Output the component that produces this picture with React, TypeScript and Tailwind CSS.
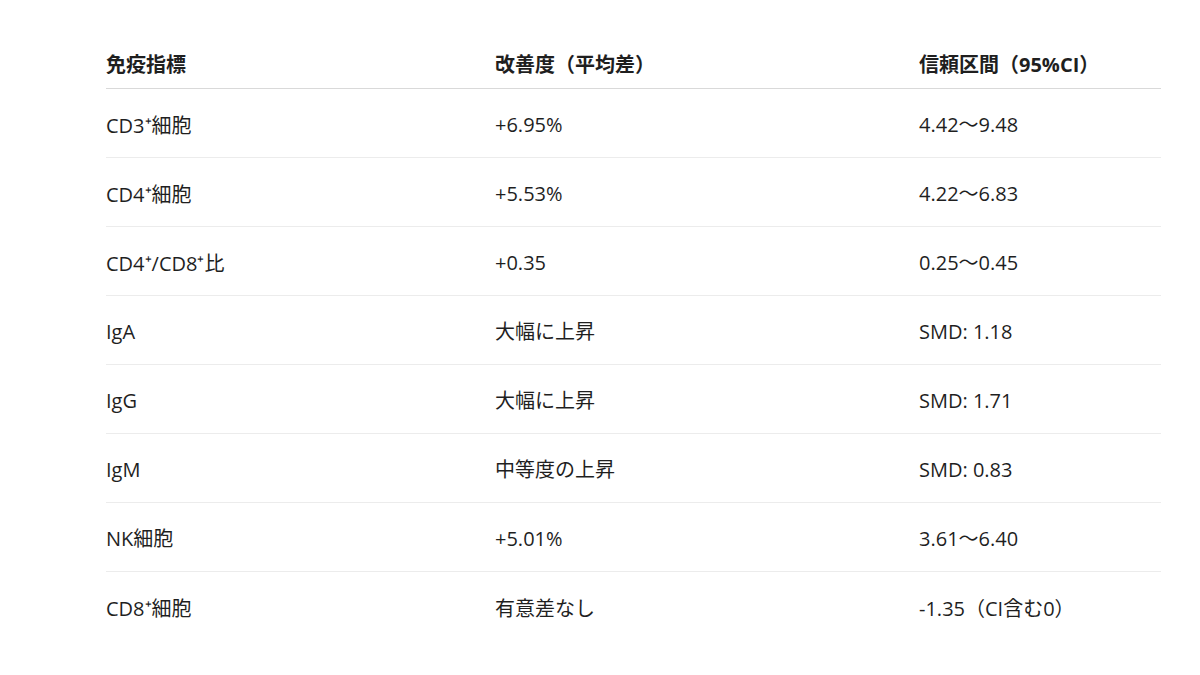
import React from "react";

const P = () => (
  <span style={{ fontFamily: '"Noto Sans CJK JP", sans-serif' }}>⁺</span>
);

const rows: [React.ReactNode, string, string][] = [
  [<>CD3<P />細胞</>, "+6.95%", "4.42～9.48"],
  [<>CD4<P />細胞</>, "+5.53%", "4.22～6.83"],
  [<>CD4<P />/CD8<P />比</>, "+0.35", "0.25～0.45"],
  ["IgA", "大幅に上昇", "SMD: 1.18"],
  ["IgG", "大幅に上昇", "SMD: 1.71"],
  ["IgM", "中等度の上昇", "SMD: 0.83"],
  ["NK細胞", "+5.01%", "3.61～6.40"],
  [<>CD8<P />細胞</>, "有意差なし", "-1.35（CI含む0）"],
];

export default function App() {
  return (
    <div
      className="w-[1200px] h-[675px] bg-white text-[#1f1f1f] overflow-hidden"
      style={{ fontFamily: '"Open Sans", "Noto Sans CJK JP", sans-serif' }}
    >
      <div className="pt-[41px] pl-[106px] pr-[39px]">
        <div className="flex h-[48px] items-center border-b border-[#d9d9d9] text-[20px] font-bold">
          <div className="w-[389px]">免疫指標</div>
          <div className="w-[424px]">改善度（平均差）</div>
          <div className="flex-1">信頼区間（95%CI）</div>
        </div>
        {rows.map((r, i) => (
          <div
            key={i}
            className={
              "flex h-[69px] items-center pt-[4px] text-[20px] " +
              (i < rows.length - 1 ? "border-b border-[#ececec]" : "")
            }
          >
            <div className="w-[389px]">{r[0]}</div>
            <div className="w-[424px]">{r[1]}</div>
            <div className="flex-1">{r[2]}</div>
          </div>
        ))}
      </div>
    </div>
  );
}
